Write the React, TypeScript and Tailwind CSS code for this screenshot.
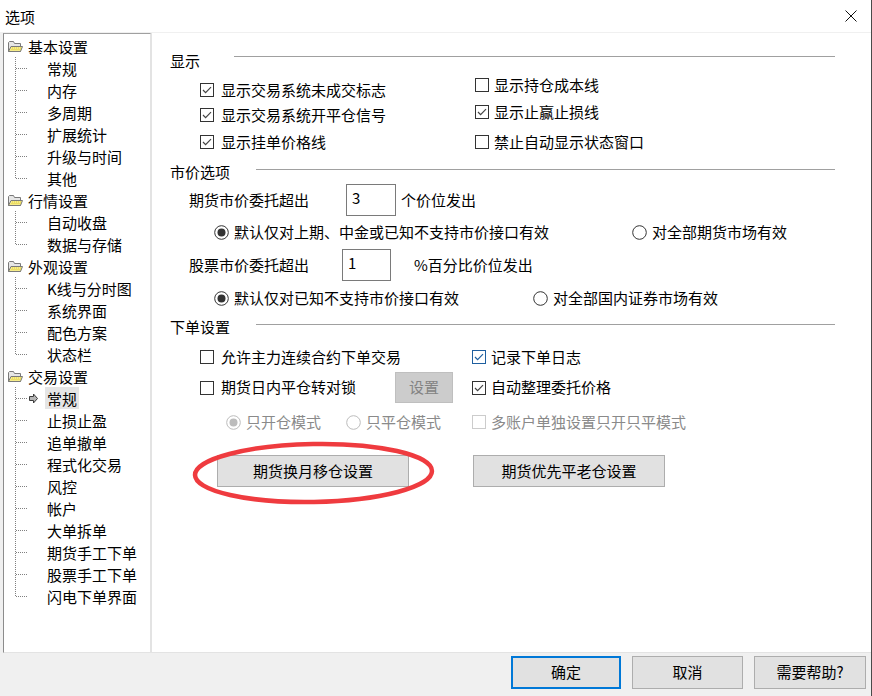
import React from 'react';

type Group = { label: string; children: string[] };

const tree: Group[] = [
  { label: '基本设置', children: ['常规', '内存', '多周期', '扩展统计', '升级与时间', '其他'] },
  { label: '行情设置', children: ['自动收盘', '数据与存储'] },
  { label: '外观设置', children: ['K线与分时图', '系统界面', '配色方案', '状态栏'] },
  {
    label: '交易设置',
    children: ['常规', '止损止盈', '追单撤单', '程式化交易', '风控', '帐户', '大单拆单', '期货手工下单', '股票手工下单', '闪电下单界面'],
  },
];

const Folder = () => (
  <svg width="15" height="13" viewBox="0 0 15 13">
    <path d="M0.5 2.5 V11.5 H12.5 V3.5 H6.5 L5.5 1.5 H1.5 Z" fill="#e6e6e6" stroke="#7a7a7a" />
    <path d="M0.5 11.5 L3 6.5 H14.5 L12.5 11.5 Z" fill="#f6ec8a" stroke="#7a7a7a" />
    <path d="M4 8 H13 M3.5 9.5 H12.5" stroke="#e0cc3c" strokeDasharray="1 1" />
  </svg>
);

const Connector = ({ last, selected }: { last: boolean; selected: boolean }) => (
  <svg width="32" height="22" viewBox="0 0 32 22" className="shrink-0">
    <line x1="0.5" y1="0" x2="0.5" y2={last ? 11 : 22} stroke="#808080" strokeDasharray="1 1" />
    <line x1="1" y1="11.5" x2={selected ? 13 : 12} y2="11.5" stroke="#808080" strokeDasharray="1 1" />
    {selected && (
      <path d="M14.5 9.5 H18.5 V7 L22.5 11.5 L18.5 16 V13.5 H14.5 Z" fill="#b5b5b5" stroke="#3c3c3c" />
    )}
  </svg>
);

const Box = ({ checked, focus, disabled }: { checked?: boolean; focus?: boolean; disabled?: boolean }) => (
  <span
    className={`flex h-[14px] w-[14px] shrink-0 items-center justify-center border bg-white ${
      disabled ? 'border-[#cccccc]' : focus ? 'border-[#1e5f9f]' : 'border-[#333333]'
    }`}
  >
    {checked && (
      <svg width="12" height="12" viewBox="0 0 12 12">
        <path d="M2 6 L4.6 8.6 L10 3.2" fill="none" stroke={focus ? '#1e5f9f' : '#444444'} strokeWidth="1.2" />
      </svg>
    )}
  </span>
);

const Radio = ({ checked, disabled }: { checked?: boolean; disabled?: boolean }) => {
  const c = disabled ? '#bcbcbc' : '#333333';
  return (
    <svg width="15" height="15" viewBox="0 0 15 15" className="shrink-0">
      <circle cx="7.5" cy="7.5" r="6.8" fill="white" stroke={c} />
      {checked && <circle cx="7.5" cy="7.5" r="4" fill={c} />}
    </svg>
  );
};

const Header = ({ text, lineGap }: { text: string; lineGap: string }) => (
  <div className="flex h-[22px] items-start pl-[18px] pr-[36px]">
    <span className="leading-[22px]">{text}</span>
    <div className={`h-px flex-1 bg-[#a0a0a0] ${lineGap}`} />
  </div>
);

export default function App() {
  return (
    <div className="flex h-[696px] w-[872px] flex-col border-r border-[#4a4a4a] bg-[#f0f0f0] font-['Noto_Sans_CJK_SC',sans-serif] text-[15px] text-black">
      {/* title bar */}
      <div className="flex h-[32px] items-center justify-between bg-white pl-[5px] pr-[14px]">
        <span className="leading-none">选项</span>
        <svg width="12" height="12" viewBox="0 0 12 12">
          <path d="M0.5 0.5 L11.5 11.5 M11.5 0.5 L0.5 11.5" stroke="#111" strokeWidth="1" />
        </svg>
      </div>

      <div className="mt-[1px] flex h-[620px] pl-[3px]">
        {/* tree */}
        <div className="w-[148px] border-b border-l border-r border-t border-b-[#e3e3e3] border-l-[#8c8c8c] border-r-[#e3e3e3] border-t-[#a0a0a0] bg-white pt-[1px]">
          {tree.map((g) => (
            <div key={g.label}>
              <div className="flex h-[22px] items-center pl-[4px]">
                <Folder />
                <span className="ml-[5px] leading-none">{g.label}</span>
              </div>
              {g.children.map((c, i) => {
                const selected = g.label === '交易设置' && c === '常规';
                return (
                  <div key={c} className="flex h-[22px] items-center pl-[11px]">
                    <Connector last={i === g.children.length - 1} selected={selected} />
                    <span
                      className={`-ml-[2px] flex h-[22px] items-center px-[2px] leading-none ${
                        selected ? 'bg-[#e5e5e5]' : ''
                      }`}
                    >
                      {c}
                    </span>
                  </div>
                );
              })}
            </div>
          ))}
        </div>

        {/* content panel */}
        <div className="relative flex-1 border-b border-l border-b-[#e3e3e3] border-l-[#e3e3e3] bg-white">
          <div className="mt-[17px]">
            <Header text="显示" lineGap="ml-[34px] mt-[6px]" />
          </div>
          <div className="flex pl-[48px]">
            <div className="flex w-[275px] flex-col">
              <label className="mt-[7px] flex h-[22px] items-center">
                <Box checked />
                <span className="ml-[7px]">显示交易系统未成交标志</span>
              </label>
              <label className="mt-[3px] flex h-[22px] items-center">
                <Box checked />
                <span className="ml-[7px]">显示交易系统开平仓信号</span>
              </label>
              <label className="mt-[5px] flex h-[22px] items-center">
                <Box checked />
                <span className="ml-[7px]">显示挂单价格线</span>
              </label>
            </div>
            <div className="flex flex-col">
              <label className="mt-[2px] flex h-[22px] items-center">
                <Box />
                <span className="ml-[5px]">显示持仓成本线</span>
              </label>
              <label className="mt-[5px] flex h-[22px] items-center">
                <Box checked />
                <span className="ml-[5px]">显示止赢止损线</span>
              </label>
              <label className="mt-[8px] flex h-[22px] items-center">
                <Box />
                <span className="ml-[5px]">禁止自动显示状态窗口</span>
              </label>
            </div>
          </div>

          <div className="mt-[8px]">
            <Header text="市价选项" lineGap="ml-[26px] mt-[8px]" />
          </div>
          <div className="mt-[1px] flex h-[32px] items-center pl-[37px]">
            <span className="w-[157px]">期货市价委托超出</span>
            <div className="h-[32px] w-[50px] border border-[#7a7a7a] pl-[5px] pt-[2px] leading-[22px]">3</div>
            <span className="ml-[5px]">个价位发出</span>
          </div>
          <div className="mt-[5px] flex h-[22px] items-center pl-[62px]">
            <label className="flex w-[418px] items-center">
              <Radio checked />
              <span className="ml-[5px]">默认仅对上期、中金或已知不支持市价接口有效</span>
            </label>
            <label className="flex items-center">
              <Radio />
              <span className="ml-[5px]">对全部期货市场有效</span>
            </label>
          </div>
          <div className="mt-[6px] flex h-[32px] items-center pl-[37px]">
            <span className="w-[153px]">股票市价委托超出</span>
            <div className="h-[32px] w-[49px] border border-[#7a7a7a] pl-[5px] pt-[2px] leading-[22px]">1</div>
            <span className="ml-[23px]">%百分比价位发出</span>
          </div>
          <div className="mt-[6px] flex h-[22px] items-center pl-[62px]">
            <label className="flex w-[319px] items-center">
              <Radio checked />
              <span className="ml-[5px]">默认仅对已知不支持市价接口有效</span>
            </label>
            <label className="flex items-center">
              <Radio />
              <span className="ml-[5px]">对全部国内证券市场有效</span>
            </label>
          </div>

          <div className="mt-[7px]">
            <Header text="下单设置" lineGap="ml-[26px] mt-[8px]" />
          </div>
          <div className="mt-[8px] flex h-[22px] items-center pl-[48px]">
            <label className="flex w-[272px] items-center">
              <Box />
              <span className="ml-[7px]">允许主力连续合约下单交易</span>
            </label>
            <label className="flex items-center">
              <Box checked focus />
              <span className="ml-[5px]">记录下单日志</span>
            </label>
          </div>
          <div className="mt-[4px] flex h-[31px] items-center pl-[48px]">
            <div className="flex w-[272px] items-center">
              <label className="flex w-[195px] items-center">
                <Box />
                <span className="ml-[7px]">期货日内平仓转对锁</span>
              </label>
              <button className="flex h-[31px] w-[58px] items-center justify-center border border-[#bfbfbf] bg-[#cccccc] text-[#838383]">
                设置
              </button>
            </div>
            <label className="flex items-center">
              <Box checked />
              <span className="ml-[5px]">自动整理委托价格</span>
            </label>
          </div>
          <div className="mt-[8px] flex h-[22px] items-center pl-[74px] text-[#8a8a8a]">
            <label className="flex w-[120px] items-center">
              <Radio checked disabled />
              <span className="ml-[5px]">只开仓模式</span>
            </label>
            <label className="flex w-[126px] items-center">
              <Radio disabled />
              <span className="ml-[5px]">只平仓模式</span>
            </label>
            <label className="flex items-center">
              <Box disabled />
              <span className="ml-[5px]">多账户单独设置只开只平模式</span>
            </label>
          </div>
          <div className="mt-[22px] flex h-[32px] pl-[65px]">
            <button className="h-[32px] w-[192px] border border-[#adadad] bg-[#e1e1e1]">期货换月移仓设置</button>
            <button className="ml-[64px] h-[32px] w-[192px] border border-[#adadad] bg-[#e1e1e1]">
              期货优先平老仓设置
            </button>
          </div>

          {/* red annotation ellipse */}
          <svg width="246" height="66" viewBox="0 0 246 66" className="pointer-events-none absolute left-[39px] top-[407px]">
            <ellipse cx="122.5" cy="33" rx="118.5" ry="29" fill="none" stroke="#ef3b3f" strokeWidth="4.5" transform="rotate(-1 122.5 33)" />
          </svg>
        </div>
      </div>

      {/* footer buttons */}
      <div className="flex justify-end gap-[11px] pr-[5px] pt-[3px]">
        <button className="h-[33px] w-[110px] border-2 border-[#0078d7] bg-[#e1e1e1]">确定</button>
        <button className="h-[33px] w-[111px] border border-[#adadad] bg-[#e1e1e1]">取消</button>
        <button className="h-[33px] w-[112px] border border-[#adadad] bg-[#e1e1e1]">需要帮助?</button>
      </div>
    </div>
  );
}
